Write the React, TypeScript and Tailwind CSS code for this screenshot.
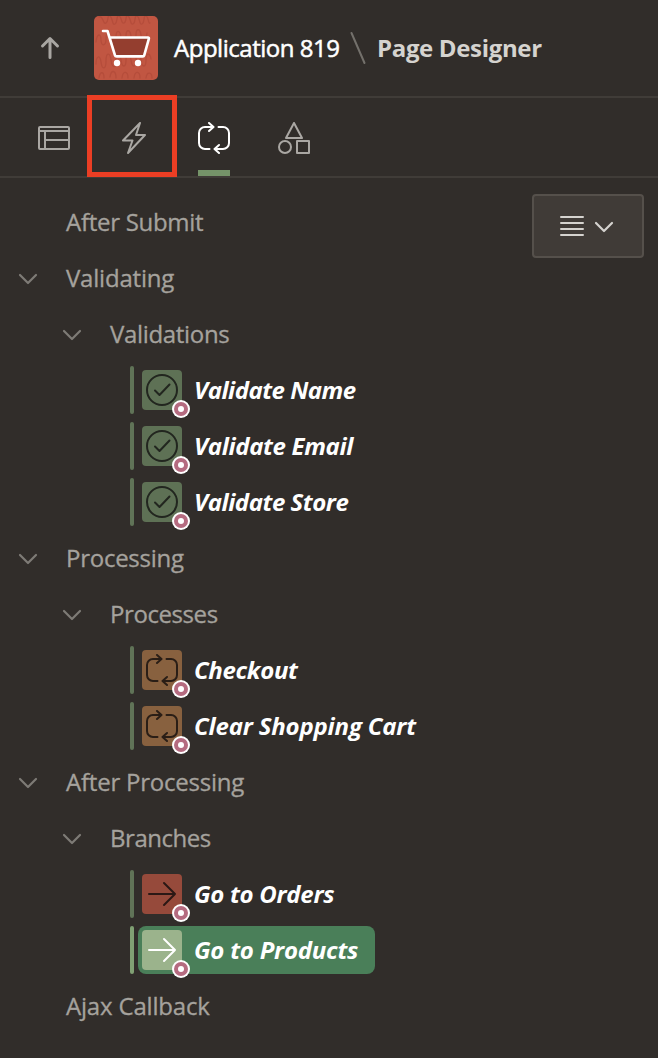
import type { ReactNode } from "react";

function ChevronDown({ className }: { className: string }) {
  return (
    <svg width="20" height="12" viewBox="0 0 20 12" fill="none" stroke="currentColor" strokeWidth="2.2" strokeLinecap="round" strokeLinejoin="round" className={className}>
      <path d="M2 2l8 8 8-8" />
    </svg>
  );
}

function CycleIcon() {
  return (
    <svg width="32" height="32" viewBox="0 0 32 32" fill="none" stroke="currentColor" strokeWidth="2" strokeLinecap="round" strokeLinejoin="round">
      <path d="M11.5 27H7a6 6 0 0 1-6-6V11a6 6 0 0 1 6-6h8" />
      <path d="M11 1l4.5 4L11 9" />
      <path d="M20.500 5H25a6 6 0 0 1 6 6v10a6 6 0 0 1-6 6h-8" />
      <path d="M21 23l-4.500 4 4.500 4" />
    </svg>
  );
}

function CheckCircleIcon() {
  return (
    <svg width="32" height="32" viewBox="0 0 32 32" fill="none" stroke="currentColor" strokeWidth="2" strokeLinecap="round" strokeLinejoin="round">
      <circle cx="16" cy="16" r="15" />
      <path d="M9 16.500l4.500 4.500 10-10.500" />
    </svg>
  );
}

function ArrowIcon() {
  return (
    <svg width="32" height="32" viewBox="0 0 32 32" fill="none" stroke="currentColor" strokeWidth="2" strokeLinecap="round" strokeLinejoin="round">
      <path d="M3 16h26M18 5l11 11-11 11" />
    </svg>
  );
}

function CartIcon() {
  return (
    <svg width="64" height="64" viewBox="0 0 64 64" fill="none" strokeLinecap="round" strokeLinejoin="round">
      <rect width="64" height="64" rx="5" fill="#c15642" />
      <g stroke="#b54d3b" strokeWidth="1.3">
        <path d="M5 1c4-2 4 8 7 6s1-9 4-7 2 10 5 8 1-9 4-8 2 8 5 7 1-9 4-7 2 9 5 8 1-9 4-8 2 9 5 8 1-9 4-8 2 8 4 7" />
        <path d="M2 26c1-9 5-9 5-2s5 6 5-1 4-7 5 0 5 6 5-2 4-7 5 0 5 6 5-1 4-7 5 0 5 6 5-1 4-7 5 0 5 6 6-2" />
        <path d="M2 48c0-8 4-10 5-2s5 8 5-1 4-9 5-1 5 9 5 1 4-9 5-1 5 8 5 0 4-8 5 0 5 8 5 0 4-8 5 0 5 8 5 0 4-7 5-1" />
        <path d="M5 62c1-7 5-7 5 0m6-1c1-8 6-7 6 1m6 0c1-8 6-7 6 0m6 0c1-8 6-7 6 0m6 0c1-7 6-6 6 0" />
      </g>
      <path d="M17 22h38l-5 18H22z" fill="#943e2f" />
      <path d="M9 15h4.500l2 6.500H54c.7 0 1.100.5.9 1.100l-4.700 16.800c-.2.700-.7 1-1.400 1H22.500c-.8 0-1.300-.4-1.500-1.100L15.500 21.500" stroke="#fff" strokeWidth="2.600" />
      <circle cx="23" cy="47" r="3.200" fill="#fff" />
      <circle cx="44" cy="47" r="3.200" fill="#fff" />
    </svg>
  );
}

function Group({ label, tracking, nested = false, leaf = false }: { label: string; tracking: string; nested?: boolean; leaf?: boolean }) {
  return (
    <div className={`flex h-14 items-center text-[#a5a29d] ${nested ? "pl-[62px]" : "pl-[18px]"}`}>
      <ChevronDown className={leaf ? "invisible" : "mt-0.5 text-[#7e7b76]"} />
      <span className={`ml-7 [-webkit-text-stroke:0.300px_#a5a29d] ${tracking}`}>{label}</span>
    </div>
  );
}

type ItemProps = { label: string; tracking: string; tile: string; icon: ReactNode; selected?: boolean };

function Item({ label, tracking, tile, icon, selected = false }: ItemProps) {
  return (
    <div className="flex h-14 items-center gap-1 pl-[130px]">
      <span className={`h-12 w-1 rounded-sm ${selected ? "bg-[#80a073]" : "bg-[#607357]"}`} />
      <div className={`flex h-12 items-center rounded-lg px-1 ${selected ? "w-[237px] bg-[#4a7f59]" : ""}`}>
        <span className={`relative flex size-10 shrink-0 items-center justify-center rounded ${tile}`}>
          {icon}
          <svg width="18" height="18" viewBox="0 0 18 18" className="absolute -right-2 -bottom-2">
            <circle cx="9" cy="9" r="9" fill="#fff" />
            <circle cx="9" cy="9" r="7" fill="#b56b80" />
            <circle cx="9" cy="9" r="3" fill="#fff" />
          </svg>
        </span>
        <span className={`ml-3 font-bold text-white italic ${tracking}`}>{label}</span>
      </div>
    </div>
  );
}

export default function App() {
  return (
    <div className="flex h-[1058px] w-[658px] flex-col overflow-hidden bg-[#312d2a] font-['Open_Sans','Noto_Sans',sans-serif] text-[24px] leading-8 whitespace-nowrap">
      <header className="flex h-[98px] shrink-0 items-center border-b-2 border-[#403c38]">
        <svg width="20" height="24" viewBox="0 0 20 24" fill="none" stroke="#a9a6a2" strokeWidth="3" strokeLinecap="round" strokeLinejoin="round" className="ml-10">
          <path d="M10 21.500V3M2.500 10L10 2.500 17.500 10" />
        </svg>
        <div className="ml-[34px]"><CartIcon /></div>
        <span className="ml-4 w-[166px] tracking-[-0.480px] text-white [-webkit-text-stroke:0.500px_white]">Application 819</span>
        <svg width="18" height="34" viewBox="0 0 18 34" fill="none" stroke="#73706b" strokeWidth="2" strokeLinecap="round" className="ml-[10px]">
          <path d="M1.500 2l13 30" />
        </svg>
        <span className="ml-[9px] font-bold tracking-[-0.340px] text-[#d5d3cf]">Page Designer</span>
      </header>

      <nav className="flex h-20 shrink-0 items-stretch border-b-2 border-[#403c38] pl-[38px] text-[#aaa7a3]">
        <div className="flex w-8 items-center">
          <svg width="32" height="26" viewBox="0 0 32 26" fill="none" stroke="currentColor" strokeWidth="2" strokeLinejoin="round" className="mt-0.5">
            <rect x="1" y="2" width="30" height="22" rx="1" />
            <path d="M1 6h30M7 6v18M7 15h24" />
          </svg>
        </div>
        <div className="-mt-[3px] -mb-px ml-[17px] flex w-[90px] items-center justify-center border-5 border-[#eb3e24]">
          <svg width="32" height="32" viewBox="0 0 32 32" fill="none" stroke="currentColor" strokeWidth="2" strokeLinejoin="round" className="mt-1 ml-1">
            <path d="M22 1L5 18.500h9.500L10 31 27 13h-9z" />
          </svg>
        </div>
        <div className="ml-[21px] flex w-8 flex-col items-center justify-between pt-6 text-white">
          <CycleIcon />
          <span className="h-1.5 w-8 bg-[#759369]" />
        </div>
        <div className="ml-12 flex w-8 items-center pt-0.5">
          <svg width="32" height="32" viewBox="0 0 32 32" fill="none" stroke="currentColor" strokeWidth="2" strokeLinejoin="round">
            <path d="M16 1l8 15H8z" />
            <circle cx="7" cy="25" r="6" />
            <rect x="19" y="19" width="12" height="12" />
          </svg>
        </div>
      </nav>

      <main className="relative pt-4">
        <button className="absolute top-4 right-[14px] flex h-16 w-28 items-center rounded border-2 border-[#55504b] bg-[#403b37] pl-[26px] text-[#d5d3cf]">
          <svg width="24" height="20" viewBox="0 0 24 20" fill="none" stroke="currentColor" strokeWidth="2" strokeLinecap="round">
            <path d="M1 1h22M1 7h22M1 13h22M1 19h22" />
          </svg>
          <ChevronDown className="mt-0.5 ml-2.5" />
        </button>
        <Group label="After Submit" tracking="tracking-[-0.280px]" leaf />
        <Group label="Validating" tracking="tracking-[-0.200px]" />
        <Group label="Validations" tracking="tracking-[-0.320px]" nested />
        <Item label="Validate Name" tracking="tracking-[-0.500px]" tile="bg-[#5e7155] text-[#22261f]" icon={<CheckCircleIcon />} />
        <Item label="Validate Email" tracking="tracking-[-0.350px]" tile="bg-[#5e7155] text-[#22261f]" icon={<CheckCircleIcon />} />
        <Item label="Validate Store" tracking="tracking-[-0.450px]" tile="bg-[#5e7155] text-[#22261f]" icon={<CheckCircleIcon />} />
        <Group label="Processing" tracking="tracking-[-0.260px]" />
        <Group label="Processes" tracking="tracking-[-0.420px]" nested />
        <Item label="Checkout" tracking="tracking-[-0.320px]" tile="bg-[#88613f] text-[#2a1e16]" icon={<CycleIcon />} />
        <Item label="Clear Shopping Cart" tracking="tracking-[-0.180px]" tile="bg-[#88613f] text-[#2a1e16]" icon={<CycleIcon />} />
        <Group label="After Processing" tracking="tracking-[-0.220px]" />
        <Group label="Branches" tracking="tracking-[-0.460px]" nested />
        <Item label="Go to Orders" tracking="tracking-[-0.280px]" tile="bg-[#964a3b] text-[#2b1815]" icon={<ArrowIcon />} />
        <Item label="Go to Products" tracking="tracking-[-0.220px]" tile="bg-[#9bb38c] text-white" icon={<ArrowIcon />} selected />
        <Group label="Ajax Callback" tracking="tracking-[-0.180px]" leaf />
      </main>
    </div>
  );
}
